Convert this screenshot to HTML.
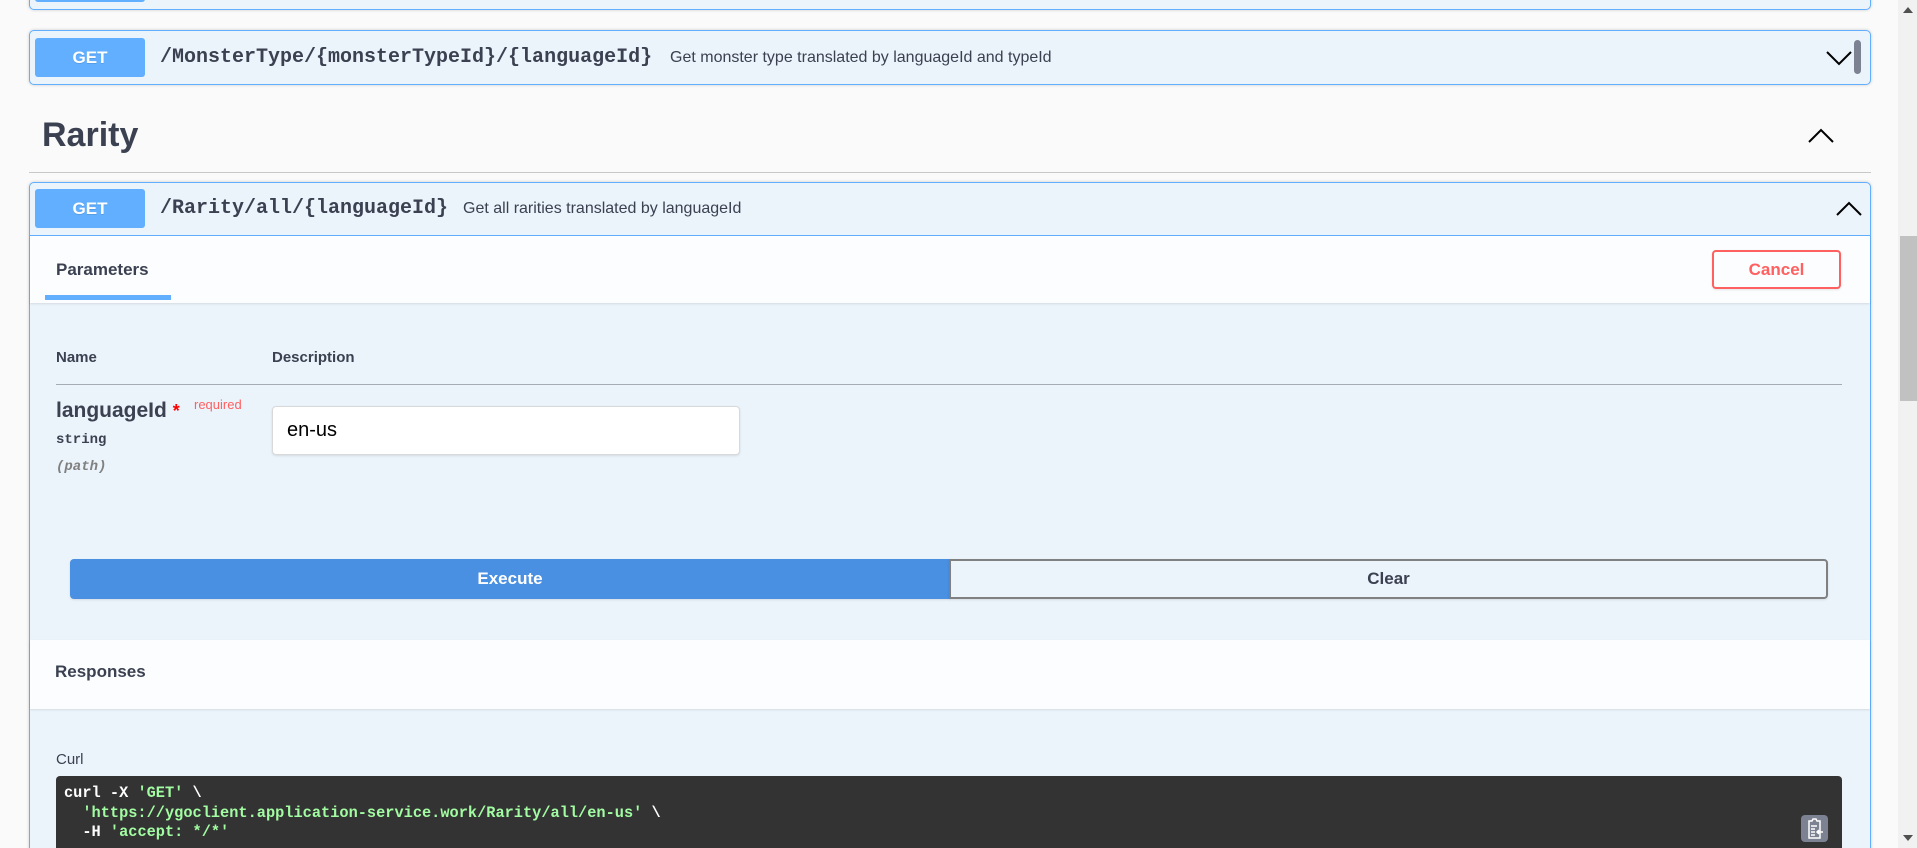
<!DOCTYPE html>
<html style="width:1917px;height:848px;overflow:hidden"><head><meta charset="utf-8"><style>
*{box-sizing:border-box;margin:0;padding:0}
body{width:1917px;height:848px;overflow:hidden;background:#fafafa;font-family:"Liberation Sans",Arial,sans-serif;color:#3b4151;position:relative}
.a{position:absolute}
.ob{border:1px solid #61affe;border-radius:5px;background:#ebf3fb;box-shadow:0 0 3px rgba(0,0,0,.19)}
.get{background:#61affe;color:#fff;border-radius:3px;font-weight:bold;font-size:17px;text-align:center;line-height:39px;text-shadow:0 1px 0 rgba(0,0,0,.1)}
.path{font-family:"Liberation Mono",monospace;font-weight:bold;font-size:20px;color:#3b4151}
.sum{font-size:16px;color:#3b4151}
.mono{font-family:"Liberation Mono",monospace}
</style></head><body>
<div class="a ob" style="left:29px;top:-20px;width:1842px;height:30px"></div>
<div class="a get" style="left:35px;top:-10px;width:110px;height:12px"></div>

<div class="a ob" style="left:29px;top:30px;width:1842px;height:55px"></div>
<div class="a get" style="left:35px;top:38px;width:110px;height:39px">GET</div>
<div class="a path" style="left:160px;top:46px">/MonsterType/{monsterTypeId}/{languageId}</div>
<div class="a sum" style="left:670px;top:49px">Get monster type translated by languageId and typeId</div>
<svg class="a" style="left:1825px;top:48px" width="28" height="20" viewBox="0 0 28 20"><path d="M2 4 L14 16 L26 4" fill="none" stroke="#000" stroke-width="2"/></svg>
<div class="a" style="left:1854px;top:40px;width:7px;height:34px;background:#7d8293;border-radius:4px"></div>

<div class="a" style="left:42px;top:116px;font-size:34px;font-weight:bold;color:#3b4151">Rarity</div>
<svg class="a" style="left:1807px;top:126px" width="28" height="20" viewBox="0 0 28 20"><path d="M2 16 L14 4 L26 16" fill="none" stroke="#000" stroke-width="2"/></svg>
<div class="a" style="left:29px;top:172px;width:1842px;height:1px;background:#c8c8c8"></div>

<div class="a" style="left:29px;top:182px;width:1842px;height:690px;border:1px solid #61affe;border-radius:5px;background:#ebf3fb;box-shadow:0 0 3px rgba(0,0,0,.19)"></div>
<div class="a" style="left:30px;top:235px;width:1840px;height:1px;background:#61affe"></div>
<div class="a get" style="left:35px;top:189px;width:110px;height:39px">GET</div>
<div class="a path" style="left:160px;top:197px">/Rarity/all/{languageId}</div>
<div class="a sum" style="left:463px;top:200px">Get all rarities translated by languageId</div>
<svg class="a" style="left:1835px;top:199px" width="28" height="20" viewBox="0 0 28 20"><path d="M2 16 L14 4 L26 16" fill="none" stroke="#000" stroke-width="2"/></svg>

<div class="a" style="left:30px;top:236px;width:1840px;height:67px;background:rgba(255,255,255,.8);box-shadow:0 1px 2px rgba(0,0,0,.1)"></div>
<div class="a" style="left:56px;top:260px;font-size:17px;font-weight:bold">Parameters</div>
<div class="a" style="left:45px;top:295px;width:126px;height:5px;background:#61affe"></div>
<div class="a" style="left:1712px;top:250px;width:129px;height:39px;border:2px solid #ff6060;border-radius:4px;color:#ff6060;font-weight:bold;font-size:17px;text-align:center;line-height:35px;box-shadow:0 1px 2px rgba(0,0,0,.1)">Cancel</div>

<div class="a" style="left:56px;top:349px;font-size:15px;font-weight:bold">Name</div>
<div class="a" style="left:272px;top:349px;font-size:15px;font-weight:bold">Description</div>
<div class="a" style="left:56px;top:384px;width:1786px;height:1px;background:#a7abb4"></div>
<div class="a" style="left:56px;top:399px;font-size:21px;font-weight:bold">languageId <span style="color:red;font-size:18px">*</span></div>
<div class="a" style="left:194px;top:397px;font-size:13px;color:#ff6060">required</div>
<div class="a mono" style="left:56px;top:432px;font-size:14px;font-weight:bold">string</div>
<div class="a mono" style="left:56px;top:459px;font-size:14px;font-style:italic;color:#808080;font-weight:bold">(path)</div>
<div class="a" style="left:272px;top:406px;width:468px;height:49px;background:#fff;border:1px solid #d9d9d9;border-radius:4px;box-shadow:0 1px 2px rgba(0,0,0,.1);font-size:20px;padding:12px 0 0 14px;color:#000">en-us</div>

<div class="a" style="left:70px;top:559px;width:880px;height:40px;background:#4990e2;border-radius:4px 0 0 4px;color:#fff;font-weight:bold;font-size:17px;text-align:center;line-height:40px;box-shadow:0 1px 2px rgba(0,0,0,.1)">Execute</div>
<div class="a" style="left:949px;top:559px;width:879px;height:40px;border:2px solid #808080;border-radius:0 4px 4px 0;color:#3b4151;font-weight:bold;font-size:17px;text-align:center;line-height:36px;box-shadow:0 1px 2px rgba(0,0,0,.1)">Clear</div>

<div class="a" style="left:30px;top:640px;width:1840px;height:69px;background:rgba(255,255,255,.8);box-shadow:0 1px 2px rgba(0,0,0,.1)"></div>
<div class="a" style="left:55px;top:662px;font-size:17px;font-weight:bold">Responses</div>

<div class="a" style="left:56px;top:751px;font-size:15px">Curl</div>
<div class="a mono" style="left:56px;top:776px;width:1786px;height:80px;background:#333;border-radius:4px 4px 0 0;color:#fff;font-size:15.3px;font-weight:bold;line-height:19.5px;padding:8px 0 0 8px;white-space:pre">curl -X <span style="color:#a2fca2">'GET'</span> \
  <span style="color:#a2fca2">'https://ygoclient.application-service.work/Rarity/all/en-us'</span> \
  -H <span style="color:#a2fca2">'accept: */*'</span></div>
<div class="a" style="left:1801px;top:815px;width:27px;height:27px;background:#7d8293;border-radius:4px"></div>
<svg class="a" style="left:1801px;top:815px" width="27" height="27" viewBox="0 0 27 27"><path d="M8 6h3l1-2h3l1 2h3v17H8z" fill="none" stroke="#fff" stroke-width="1.5"/><path d="M10 11h6M10 14h4M10 17h4M10 20h4M22 17h-6M18 15l-2 2 2 2" fill="none" stroke="#fff" stroke-width="1.5"/></svg>

<div class="a" style="left:1898px;top:0;width:19px;height:848px;background:#f1f1f1"></div>
<div class="a" style="left:1900px;top:236px;width:17px;height:165px;background:#c1c1c1"></div>
<svg class="a" style="left:1902px;top:6px" width="12" height="8"><path d="M1 7L6 1L11 7z" fill="#505050"/></svg>
<svg class="a" style="left:1902px;top:834px" width="12" height="8"><path d="M1 1L6 7L11 1z" fill="#505050"/></svg>
</body></html>
